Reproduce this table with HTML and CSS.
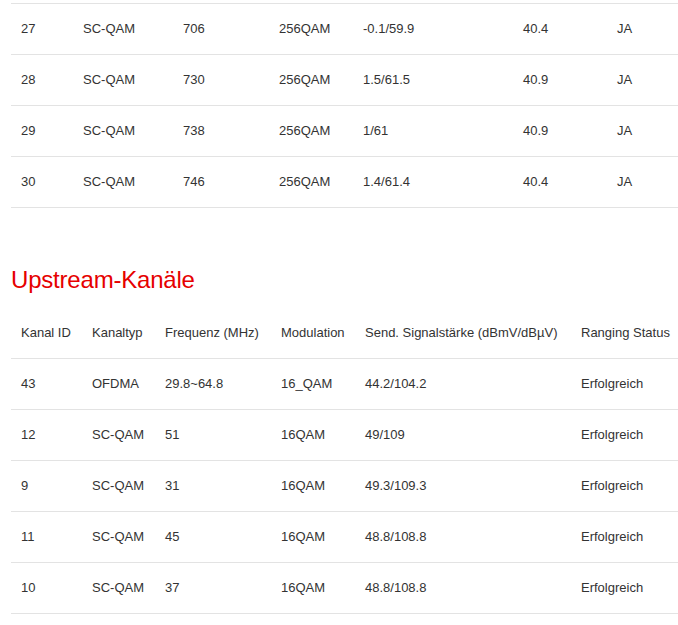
FILE: index.html
```html
<!DOCTYPE html>
<html lang="de">
<head>
<meta charset="utf-8">
<title>Kanäle</title>
<link rel="stylesheet" href="styles.css">
</head>
<body>
<main class="page">
  <table class="grid grid-down">
    <colgroup>
      <col class="c62"><col class="c100"><col class="c96"><col class="c84"><col class="c160"><col class="c94"><col class="c71">
    </colgroup>
    <tbody>
      <tr><td>27</td><td>SC-QAM</td><td>706</td><td>256QAM</td><td>-0.1/59.9</td><td>40.4</td><td>JA</td></tr>
      <tr><td>28</td><td>SC-QAM</td><td>730</td><td>256QAM</td><td>1.5/61.5</td><td>40.9</td><td>JA</td></tr>
      <tr><td>29</td><td>SC-QAM</td><td>738</td><td>256QAM</td><td>1/61</td><td>40.9</td><td>JA</td></tr>
      <tr><td>30</td><td>SC-QAM</td><td>746</td><td>256QAM</td><td>1.4/61.4</td><td>40.4</td><td>JA</td></tr>
    </tbody>
  </table>

  <h2 class="title">Upstream-Kanäle</h2>

  <table class="grid grid-up">
    <colgroup>
      <col class="c71"><col class="c73"><col class="c116"><col class="c84"><col class="c216"><col class="c107">
    </colgroup>
    <thead>
      <tr><th>Kanal ID</th><th>Kanaltyp</th><th>Frequenz (MHz)</th><th>Modulation</th><th>Send. Signalstärke (dBmV/dBµV)</th><th>Ranging Status</th></tr>
    </thead>
    <tbody>
      <tr><td>43</td><td>OFDMA</td><td>29.8~64.8</td><td>16_QAM</td><td>44.2/104.2</td><td>Erfolgreich</td></tr>
      <tr><td>12</td><td>SC-QAM</td><td>51</td><td>16QAM</td><td>49/109</td><td>Erfolgreich</td></tr>
      <tr><td>9</td><td>SC-QAM</td><td>31</td><td>16QAM</td><td>49.3/109.3</td><td>Erfolgreich</td></tr>
      <tr><td>11</td><td>SC-QAM</td><td>45</td><td>16QAM</td><td>48.8/108.8</td><td>Erfolgreich</td></tr>
      <tr><td>10</td><td>SC-QAM</td><td>37</td><td>16QAM</td><td>48.8/108.8</td><td>Erfolgreich</td></tr>
    </tbody>
  </table>
</main>
</body>
</html>
```

FILE: styles.css
```css
html, body {
  margin: 0;
  padding: 0;
  background: #ffffff;
}

.page {
  padding: 3px 0 0 11px;
  font-family: "Liberation Sans", Arial, sans-serif;
  font-size: 13px;
  color: #333333;
}

.grid {
  width: 667px;
  border-collapse: collapse;
  table-layout: fixed;
}

.grid td,
.grid th {
  padding: 16px 10px;
  line-height: 18px;
  text-align: left;
  font-weight: normal;
  white-space: nowrap;
  vertical-align: middle;
  border-bottom: 1px solid #e3e3e3;
}

.grid-down tbody tr:first-child td {
  border-top: 1px solid #e3e3e3;
}

.c62 { width: 62px; }
.c71 { width: 71px; }
.c73 { width: 73px; }
.c84 { width: 84px; }
.c94 { width: 94px; }
.c96 { width: 96px; }
.c100 { width: 100px; }
.c107 { width: 107px; }
.c116 { width: 116px; }
.c160 { width: 160px; }
.c216 { width: 216px; }

.title {
  margin: 57px 0 13px 0;
  font-family: "Liberation Sans", Arial, sans-serif;
  font-size: 24px;
  line-height: 30px;
  font-weight: normal;
  color: #e60000;
  letter-spacing: -0.2px;
}
```
